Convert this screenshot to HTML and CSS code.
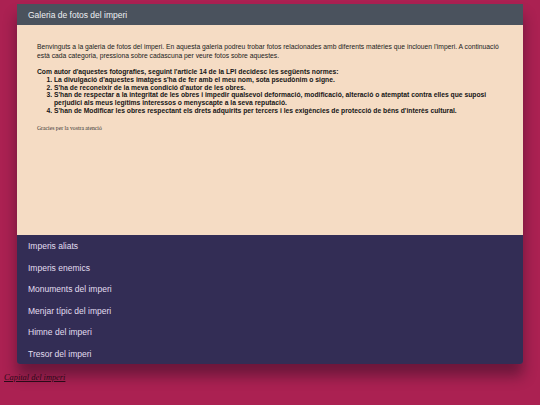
FILE: index.html
```html
<!DOCTYPE html>
<html lang="ca">
<head>
<meta charset="utf-8">
<title>Galeria de fotos del imperi</title>
<link rel="stylesheet" href="styles.css">
</head>
<body>
<div class="page">
  <div class="card">
    <div class="header">Galeria de fotos del imperi</div>
    <div class="content">
      <p class="intro">Benvinguts a la galeria de fotos del imperi. En aquesta galeria podreu trobar fotos relacionades amb diferents matèries que inclouen l'imperi. A continuació està cada categoria, pressiona sobre cadascuna per veure fotos sobre aquestes.</p>
      <div class="rules">
        <p class="rules-title">Com autor d'aquestes fotografies, seguint l'article 14 de la LPI decidesc les següents normes:</p>
        <ol class="rules-list">
          <li>La divulgació d'aquestes imatges s'ha de fer amb el meu nom, sota pseudònim o signe.</li>
          <li>S'ha de reconeixir de la meva condició d'autor de les obres.</li>
          <li>S'han de respectar a la integritat de les obres i impedir qualsevol deformació, modificació, alteració o atemptat contra elles que suposi perjudici als meus legítims interessos o menyscapte a la seva reputació.</li>
          <li>S'han de Modificar les obres respectant els drets adquirits per tercers i les exigències de protecció de béns d'interès cultural.</li>
        </ol>
      </div>
      <p class="thanks">Gracies per la vostra atenció</p>
    </div>
    <nav class="nav">
      <div class="nav-item">Imperis aliats</div>
      <div class="nav-item">Imperis enemics</div>
      <div class="nav-item">Monuments del imperi</div>
      <div class="nav-item">Menjar típic del imperi</div>
      <div class="nav-item">Himne del imperi</div>
      <div class="nav-item">Tresor del imperi</div>
    </nav>
  </div>
</div>
<a class="capital" href="#">Capital del imperi</a>
</body>
</html>
```

FILE: styles.css
```css
html, body {
  margin: 0;
  padding: 0;
}
body {
  background: #ab2152;
  width: 540px;
  height: 405px;
  overflow: hidden;
}
.page {
  padding: 4px 17px 0 17px;
}
.card {
  border-radius: 0 0 3px 3px;
  overflow: hidden;
  box-shadow: 0 12px 14px rgba(30, 10, 30, 0.45);
}
.header {
  background: #4a525d;
  height: 21px;
  line-height: 22px;
  padding-left: 11px;
  color: #eef0f2;
  font-family: "Liberation Sans", Arial, sans-serif;
  font-size: 8.5px;
}
.content {
  background: #f5dcc4;
  height: 210px;
  box-sizing: border-box;
  padding: 17px 14px 0 20px;
  font-family: "Liberation Sans", Arial, sans-serif;
  color: #222;
}
.intro {
  margin: 0;
  font-size: 6.75px;
  line-height: 9px;
}
.rules {
  margin-top: 8px;
  font-weight: bold;
  font-size: 6.75px;
  line-height: 7.8px;
  color: #151515;
}
.rules-title {
  margin: 0;
}
.rules-list {
  margin: 0;
  padding-left: 17px;
}
.thanks {
  margin: 10px 0 0 0;
  font-family: "Liberation Serif", "Times New Roman", serif;
  font-size: 5.7px;
  color: #333;
}
.nav {
  background: #332d55;
}
.nav-item {
  height: 21.5px;
  line-height: 23px;
  padding-left: 11px;
  color: #e2def0;
  font-family: "Liberation Sans", Arial, sans-serif;
  font-size: 8.5px;
}
.capital {
  display: inline-block;
  margin: 9px 0 0 4px;
  font-family: "Liberation Serif", "Times New Roman", serif;
  font-style: italic;
  font-size: 8.4px;
  color: #2a0a18;
  text-decoration: underline;
}
```
